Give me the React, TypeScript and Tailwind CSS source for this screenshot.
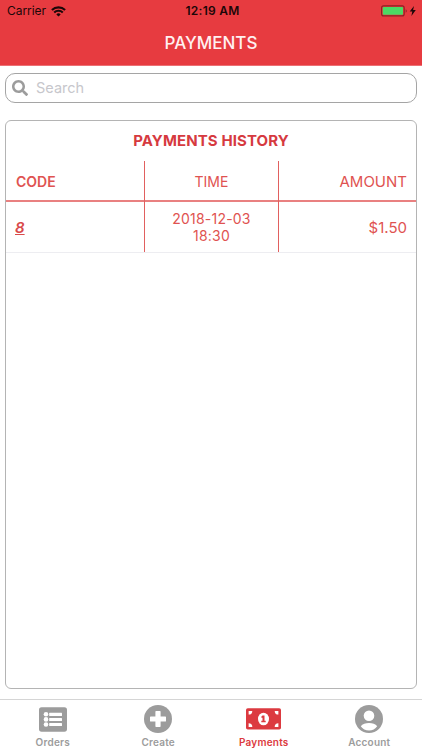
import type { ReactNode } from 'react';
import { FaSearch } from 'react-icons/fa';

function WifiIcon() {
  return (
    <svg width="15" height="11" viewBox="0 0 15 11" fill="none" stroke="#1c0708" strokeWidth="2.1">
      <path d="M0.9 4.1a9.4 9.4 0 0 1 13.2 0" />
      <path d="M3.2 6.5a6.1 6.1 0 0 1 8.6 0" />
      <path d="M7.5 10.6 5.3 8.4a3.1 3.1 0 0 1 4.4 0Z" fill="#1c0708" stroke="none" />
    </svg>
  );
}

function BatteryIcon() {
  return (
    <svg width="37" height="12" viewBox="0 0 37 12">
      <rect x="0.6" y="0.9" width="22.6" height="10" rx="2" fill="none" stroke="#8d2024" strokeWidth="1.1" />
      <rect x="1.8" y="2.1" width="20.2" height="7.6" rx="0.8" fill="#4cd964" />
      <path d="M24.7 4.2c1.4.5 1.4 3 0 3.5Z" fill="#8d2024" />
      <path d="M33 1 28.7 6.6h2.6L30.4 11l4.4-5.9h-2.7Z" fill="#1c0708" />
    </svg>
  );
}

function OrdersIcon() {
  return (
    <svg width="28" height="25" viewBox="0 0 28 25">
      <rect y="0.3" width="28" height="24.4" rx="2.6" fill="currentColor" />
      <g fill="white">
        <circle cx="7" cy="7.3" r="2.3" />
        <circle cx="7" cy="12.4" r="2.3" />
        <circle cx="7" cy="17.5" r="2.3" />
        <rect x="10.2" y="5.8" width="12.8" height="3.1" rx="0.5" />
        <rect x="10.2" y="10.9" width="12.8" height="3.1" rx="0.5" />
        <rect x="10.2" y="16" width="12.8" height="3.1" rx="0.5" />
      </g>
    </svg>
  );
}

function CreateIcon() {
  return (
    <svg width="28" height="28" viewBox="0 0 28 28">
      <circle cx="14" cy="14" r="14" fill="currentColor" />
      <rect x="6" y="11.4" width="16" height="5.2" rx="0.7" fill="white" />
      <rect x="11.4" y="6" width="5.2" height="16" rx="0.7" fill="white" />
    </svg>
  );
}

function BillIcon() {
  return (
    <svg width="35" height="22" viewBox="0 0 35 22">
      <rect y="0.3" width="35" height="21.3" rx="1.8" fill="currentColor" />
      <g fill="white">
        <path d="M2.6 2.9H6.3A3.7 3.7 0 0 1 2.6 6.6Z" />
        <path d="M32.4 2.9H28.7A3.7 3.7 0 0 0 32.4 6.6Z" />
        <path d="M2.6 19H6.3A3.7 3.7 0 0 0 2.6 15.3Z" />
        <path d="M32.4 19H28.7A3.7 3.7 0 0 1 32.4 15.3Z" />
        <ellipse cx="17.5" cy="11" rx="5.5" ry="6.3" />
      </g>
      <path d="M16.600 7.600H18.500V12.700H19.700V14.300H15.300V12.700H16.500V9.700L15.500 10V8.300Z" fill="currentColor" />
    </svg>
  );
}

function AccountIcon() {
  return (
    <svg width="28" height="28" viewBox="0 0 28 28">
      <circle cx="14" cy="14" r="14" fill="currentColor" />
      <circle cx="14" cy="10.7" r="5.3" fill="white" />
      <path d="M5.8 21.2C7.4 18.9 10.6 17.9 14 17.9s6.6 1 8.2 3.3C20.4 24 17.4 25.500 14 25.500S7.600 24 5.800 21.200Z" fill="white" />
    </svg>
  );
}

function Tab({ icon, label, active = false }: { icon: ReactNode; label: string; active?: boolean }) {
  return (
    <div className={`flex flex-1 flex-col items-center ${active ? 'text-[#dc3a40]' : 'text-[#9c9c9c]'}`}>
      <div className="flex h-[28px] items-center justify-center">{icon}</div>
      <span className="mt-[2px] text-[10px] leading-[15px] font-semibold tracking-[0.22px]">{label}</span>
    </div>
  );
}

export default function App() {
  return (
    <div className="flex h-[750px] w-[422px] flex-col bg-white font-['Inter',sans-serif]">
      <header className="h-[66px] border-b border-[#ec7074] bg-[#e73b40]">
        <div className="grid h-[22px] grid-cols-3 items-center pr-[4px] pl-[7px] text-[#1c0708]">
          <div className="flex items-center gap-[5px] text-[12px]">
            <span className="w-[39px] tracking-[-0.05px]">Carrier</span>
            <WifiIcon />
          </div>
          <span className="text-center text-[12px] font-semibold tracking-[0.25px]">12:19 AM</span>
          <div className="flex justify-end">
            <BatteryIcon />
          </div>
        </div>
        <h1 className="text-center text-[17px] leading-[43px] font-medium text-[#fff0f0]">PAYMENTS</h1>
      </header>

      <div className="mx-[5px] mt-[7px] flex h-[30px] shrink-0 items-center rounded-[10px] border border-[#a5a5a5] pl-[6px]">
        <FaSearch size={16} color="#9c9c9c" />
        <span className="ml-[8px] text-[14.5px] text-[#c7c7cc]">Search</span>
      </div>

      <main className="mx-[5px] mt-[17px] flex h-[569px] shrink-0 flex-col rounded-[6px] border border-[#b4b4b4] text-[#df5351]">
        <h2 className="h-[40px] text-center text-[15px] leading-[40px] font-bold tracking-[0.1px] text-[#d63a3f]">
          PAYMENTS HISTORY
        </h2>
        <div className="grid h-[41px] shrink-0 grid-cols-[139px_134px_1fr] border-b-2 border-b-[#e98080] text-[15px] leading-[41px]">
          <div className="border-r border-r-[#e1605f] pl-[10px] text-[14px] font-semibold">CODE</div>
          <div className="border-r border-r-[#e1605f] text-center text-[14px]">TIME</div>
          <div className="pr-[9px] text-right">AMOUNT</div>
        </div>
        <div className="grid h-[51px] shrink-0 grid-cols-[139px_134px_1fr] border-b border-b-[#ededf1] text-[15px]">
          <div className="flex items-center border-r border-r-[#e1605f] pt-[3px] pl-[9px] font-semibold text-[#d94a4a] italic underline">
            8
          </div>
          <div className="flex flex-col items-center justify-center border-r border-r-[#e1605f] text-[14px] leading-[17px] tracking-[0.2px]">
            <span>2018-12-03</span>
            <span>18:30</span>
          </div>
          <div className="flex items-center justify-end pt-[2px] pr-[9px]">$1.50</div>
        </div>
      </main>

      <nav className="mt-auto flex h-[51px] border-t border-[#d5d5d5] pt-[5px]">
        <Tab icon={<OrdersIcon />} label="Orders" />
        <Tab icon={<CreateIcon />} label="Create" />
        <Tab icon={<BillIcon />} label="Payments" active />
        <Tab icon={<AccountIcon />} label="Account" />
      </nav>
    </div>
  );
}
